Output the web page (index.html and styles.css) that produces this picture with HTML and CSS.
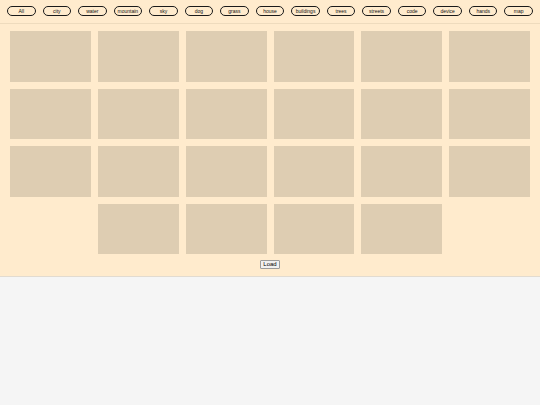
FILE: index.html
```html
<!DOCTYPE html>
<html lang="en">
<head>
<meta charset="utf-8">
<title>Gallery</title>
<link rel="stylesheet" href="styles.css">
</head>
<body>
<div class="panel">
  <nav class="tags">
    <button class="tag">All</button>
    <button class="tag">city</button>
    <button class="tag">water</button>
    <button class="tag">mountain</button>
    <button class="tag">sky</button>
    <button class="tag">dog</button>
    <button class="tag">grass</button>
    <button class="tag">house</button>
    <button class="tag">buildings</button>
    <button class="tag">trees</button>
    <button class="tag">streets</button>
    <button class="tag">code</button>
    <button class="tag">device</button>
    <button class="tag">hands</button>
    <button class="tag">map</button>
  </nav>
  <section class="gallery">
    <div class="grid">
      <div class="tile"></div><div class="tile"></div><div class="tile"></div>
      <div class="tile"></div><div class="tile"></div><div class="tile"></div>
      <div class="tile"></div><div class="tile"></div><div class="tile"></div>
      <div class="tile"></div><div class="tile"></div><div class="tile"></div>
      <div class="tile"></div><div class="tile"></div><div class="tile"></div>
      <div class="tile"></div><div class="tile"></div><div class="tile"></div>
      <div class="tile"></div><div class="tile"></div><div class="tile"></div>
      <div class="tile"></div>
    </div>
    <button class="load">Load</button>
  </section>
</div>
</body>
</html>
```

FILE: styles.css
```css
html, body {
  margin: 0;
  padding: 0;
  background: #f5f5f5;
  font-family: "Liberation Sans", Arial, sans-serif;
}

.panel {
  background: #ffebcd;
  border-bottom: 1px solid #e2dbd0;
}

.tags {
  display: flex;
  justify-content: space-evenly;
  align-items: center;
  height: 24px;
  padding-bottom: 1px;
  box-sizing: border-box;
  border-bottom: 1px solid #eedbbd;
}

.tag {
  width: 28.5px;
  height: 10px;
  padding: 0;
  border: 1px solid #1a1a1a;
  border-radius: 6px;
  background: transparent;
  font-family: "Liberation Sans", Arial, sans-serif;
  font-size: 5px;
  line-height: 8px;
  color: #111;
}

.gallery {
  display: flex;
  flex-direction: column;
  align-items: center;
  padding: 7px 10px 7px;
}

.grid {
  display: flex;
  flex-wrap: wrap;
  justify-content: center;
  gap: 7px;
  width: 100%;
}

.tile {
  width: calc((100% - 35px) / 6);
  aspect-ratio: 16 / 10;
  background: #decdb2;
}

.load {
  margin-top: 6px;
  padding: 0 2px;
  height: 9px;
  border: 1px solid #9a9a9a;
  border-radius: 1px;
  background: #f0f0f0;
  font-family: "Liberation Sans", Arial, sans-serif;
  font-size: 6px;
  font-weight: normal;
  line-height: 7px;
  color: #000;
}
```
